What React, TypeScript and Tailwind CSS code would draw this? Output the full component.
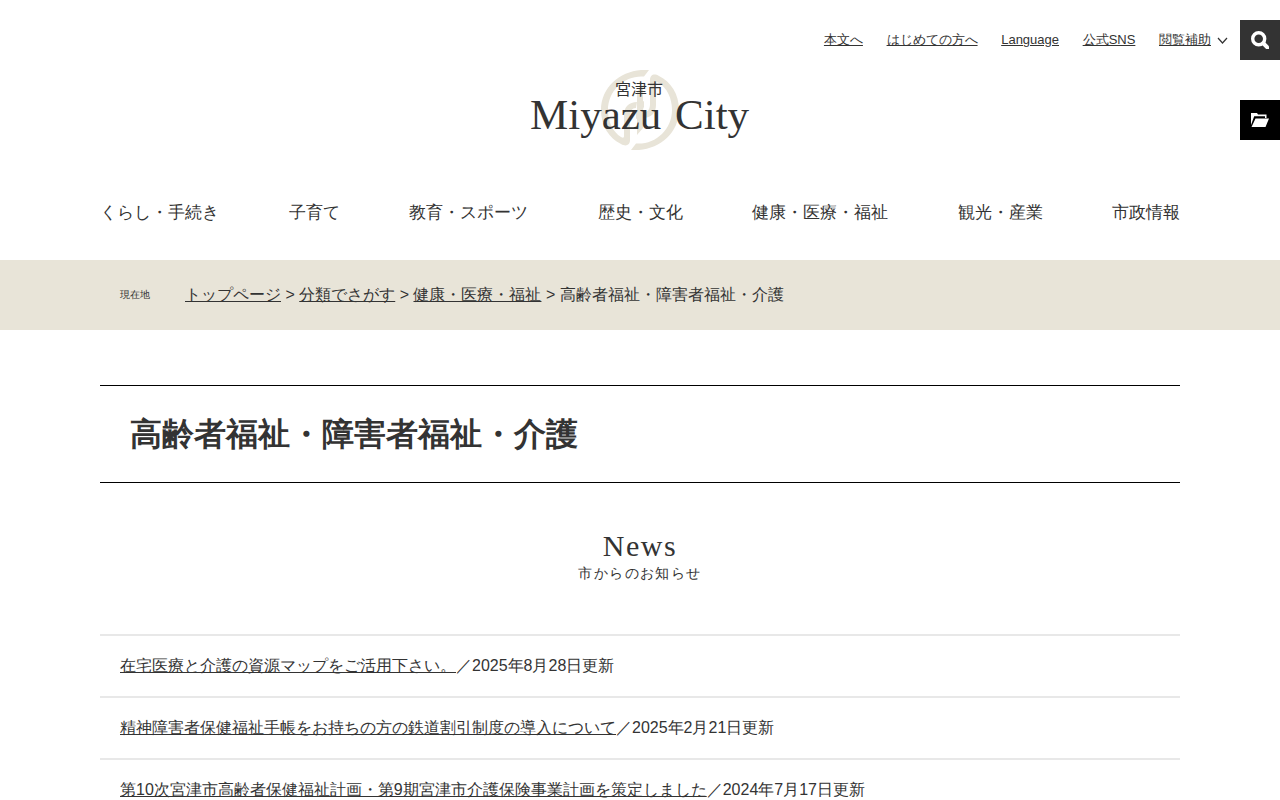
import { Fragment } from "react"

const utilityLinks = ["本文へ", "はじめての方へ", "Language", "公式SNS"]

const navItems = [
  "くらし・手続き",
  "子育て",
  "教育・スポーツ",
  "歴史・文化",
  "健康・医療・福祉",
  "観光・産業",
  "市政情報",
]

const crumbs = ["トップページ", "分類でさがす", "健康・医療・福祉"]

const news = [
  { title: "在宅医療と介護の資源マップをご活用下さい。", date: "2025年8月28日更新" },
  { title: "精神障害者保健福祉手帳をお持ちの方の鉄道割引制度の導入について", date: "2025年2月21日更新" },
  { title: "第10次宮津市高齢者保健福祉計画・第9期宮津市介護保険事業計画を策定しました", date: "2024年7月17日更新" },
]

// One half of the city emblem, the other is the same shape turned by 180 degrees
function EmblemHalf() {
  return (
    <>
      <path
        d="M119 0C94-2 71 15 71 40c0 16 8 28 20 34 5 3 9 1 9-4V46c0-5 2-8 6-8l1-6c-8 0-13 5-13 13v21c0 2-1 2-3 1C83 62 78 52 78 40 78 20 95 5 114 6.500z"
        fill="#e8e4d8"
      />
      <path d="M107 32V22l6-7v20c0 8-3 12-7 14v-6c1-1 1-3 1-5z" fill="#e8e4d8" />
    </>
  )
}

function Logo() {
  return (
    <svg width="220" height="80" viewBox="0 0 220 80" role="img" aria-label="宮津市 Miyazu City">
      <EmblemHalf />
      <g transform="rotate(180 110 40)">
        <EmblemHalf />
      </g>
      <g fill="#333">
        <text x="85" y="25" fontSize="16" className="font-['Liberation_Serif','Noto_Sans_CJK_JP',serif]">
          宮津市
        </text>
        <text x="0" y="59" fontSize="43" className="font-['Liberation_Serif',serif]">
          Miyazu
        </text>
        <text x="145" y="59" fontSize="43" className="font-['Liberation_Serif',serif]">
          City
        </text>
      </g>
    </svg>
  )
}

function SideButtons() {
  return (
    <div className="absolute right-0 top-5 flex flex-col gap-10">
      <button type="button" aria-label="検索" className="flex size-10 items-center justify-center bg-[#333]">
        <svg width="18" height="18" viewBox="0 0 18 18" fill="none" stroke="#fff">
          <circle cx="7.700" cy="7.700" r="6" strokeWidth="3.400" />
          <path d="M11.500 11.500L19 19" strokeWidth="4" />
        </svg>
      </button>
      <button type="button" aria-label="ページを一時保存" className="flex size-10 items-center justify-center bg-black">
        <svg width="18" height="14" viewBox="0 0 18 14" fill="#fff">
          <path d="M0 12V0h6l1 1.500h8.500V5H14V3.300H3.200L0 12z" />
          <path d="M4.500 5.500H18L14.500 14H0.500z" />
        </svg>
      </button>
    </div>
  )
}

export default function App() {
  return (
    <div className="relative h-screen overflow-hidden bg-white font-['Liberation_Sans',sans-serif] text-base text-[#333]" lang="ja">
      <header>
        <div className="h-[70px] pr-[52px] pt-[30px] text-right text-[13px] leading-5">
          {utilityLinks.map((label) => (
            <Fragment key={label}>
              <a href="#" className="mr-5 underline">
                {label}
              </a>{" "}
            </Fragment>
          ))}
          <a href="#" className="underline">
            閲覧補助
          </a>
          <svg className="ml-[6px] inline-block" width="11" height="7" viewBox="0 0 11 7" fill="none" stroke="#333" strokeWidth="1.200">
            <path d="M1 1l4.500 5L10 1" />
          </svg>
        </div>
        <a href="#" className="mx-auto block w-[220px]">
          <Logo />
        </a>
        <nav className="mx-auto flex h-[110px] max-w-[1080px] items-center justify-between pt-[15px] text-[17px]">
          {navItems.map((item) => (
            <a key={item} href="#">
              {item}
            </a>
          ))}
        </nav>
      </header>

      <SideButtons />

      <div className="bg-[#e8e4d8]">
        <div className="mx-auto flex h-[70px] max-w-[1080px] items-center px-5">
          <span className="w-[65px] text-[10px] leading-4">現在地</span>
          <p>
            {crumbs.map((crumb) => (
              <Fragment key={crumb}>
                <a href="#" className="underline">
                  {crumb}
                </a>
                {" > "}
              </Fragment>
            ))}
            高齢者福祉・障害者福祉・介護
          </p>
        </div>
      </div>

      <main className="mx-auto max-w-[1080px] pt-[55px]">
        <h1 className="border-y border-black px-[30px] py-6 text-[32px] leading-[48px] font-bold">
          高齢者福祉・障害者福祉・介護
        </h1>

        <section>
          <h2 className="pt-[47px] pb-[50px] text-center">
            <span className="block font-['Liberation_Serif',serif] text-[30px] leading-8 tracking-wider">News</span>
            <span className="block text-sm leading-[22px] tracking-widest">市からのお知らせ</span>
          </h2>
          <ul>
            {news.map((item) => (
              <li key={item.title} className="border-t-2 border-[#e8e8e8] px-5 py-[18px]">
                <a href="#" className="underline">
                  {item.title}
                </a>
                ／{item.date}
              </li>
            ))}
          </ul>
        </section>
      </main>
    </div>
  )
}
